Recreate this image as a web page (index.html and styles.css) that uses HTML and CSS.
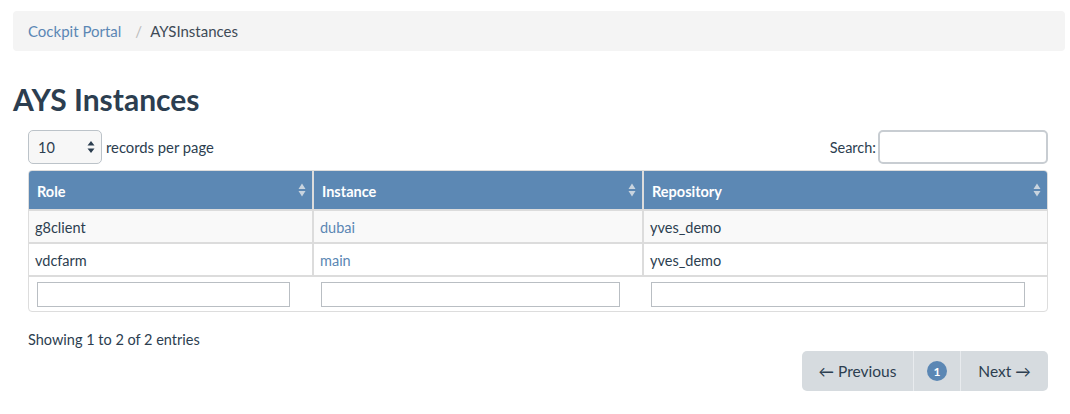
FILE: index.html
```html
<!DOCTYPE html>
<html>
<head>
<meta charset="utf-8">
<link rel="stylesheet" href="styles.css">
</head>
<body>
<div class="page">
  <nav class="breadcrumb">
    <a class="crumb-link" href="#">Cockpit Portal</a>
    <span class="crumb-sep">/</span>
    <span class="crumb-active">AYSInstances</span>
  </nav>
  <h1 class="title">AYS Instances</h1>
  <div class="dt">
    <div class="dt-top">
      <label class="length">
        <span class="select"><span class="select-val">10</span><svg class="select-arrows" width="8" height="14" viewBox="0 0 8 14"><path d="M4 1 L7.5 5.5 H0.5 Z M4 13 L7.5 8.5 H0.5 Z" fill="#2c3e50"/></svg></span>
        <span>records per page</span>
      </label>
      <label class="search">
        <span>Search:</span>
        <span class="search-input"></span>
      </label>
    </div>
    <div class="table-wrap">
      <table class="tbl">
        <colgroup><col class="c1"><col class="c2"><col class="c3"></colgroup>
        <thead>
          <tr>
            <th><span>Role</span><svg class="sort" width="8" height="14" viewBox="0 0 8 14"><path d="M4 0.5 L7.5 6 H0.5 Z M4 13.5 L7.5 8 H0.5 Z" fill="#c9d4df"/></svg></th>
            <th><span>Instance</span><svg class="sort" width="8" height="14" viewBox="0 0 8 14"><path d="M4 0.5 L7.5 6 H0.5 Z M4 13.5 L7.5 8 H0.5 Z" fill="#c9d4df"/></svg></th>
            <th><span>Repository</span><svg class="sort" width="8" height="14" viewBox="0 0 8 14"><path d="M4 0.5 L7.5 6 H0.5 Z M4 13.5 L7.5 8 H0.5 Z" fill="#c9d4df"/></svg></th>
          </tr>
        </thead>
        <tbody>
          <tr class="odd"><td>g8client</td><td><a href="#" class="lnk">dubai</a></td><td>yves_demo</td></tr>
          <tr><td>vdcfarm</td><td><a href="#" class="lnk">main</a></td><td>yves_demo</td></tr>
        </tbody>
        <tfoot>
          <tr class="filters">
            <td><span class="finput f1"></span></td>
            <td><span class="finput f2"></span></td>
            <td><span class="finput f3"></span></td>
          </tr>
        </tfoot>
      </table>
    </div>
    <div class="info">Showing 1 to 2 of 2 entries</div>
    <div class="pager-row">
      <div class="pager">
        <span class="pg pg-prev">← Previous</span>
        <span class="pg pg-num"><span class="num">1</span></span>
        <span class="pg pg-next">Next →</span>
      </div>
    </div>
  </div>
</div>
</body>
</html>
```
FILE: styles.css
```css
* { box-sizing: border-box; }
html, body { margin: 0; padding: 0; background: #fff; }
body {
  font-family: Lato, "Open Sans", sans-serif;
  color: #2c3e50;
  font-size: 14.5px;
}
.page { padding: 11px 5px 0 13px; }
.breadcrumb {
  height: 40px;
  background: #f4f4f4;
  border-radius: 4px;
  display: flex;
  align-items: center;
  padding: 0 15px;
  font-size: 15px;
}
.crumb-link { color: #5b87b4; text-decoration: none; }
.crumb-sep { color: #bbb; margin: 0 8px 0 14px; }
.crumb-active { color: #3e4a56; }
.title {
  margin: 30px 0 0 0;
  font-size: 30px;
  font-weight: 700;
  line-height: 36px;
  color: #2c3e50;
}
.dt { padding: 0 17px 0 15px; }
.dt-top {
  display: flex;
  justify-content: space-between;
  align-items: center;
  margin-top: 13px;
  height: 34px;
}
.length, .search { display: flex; align-items: center; gap: 4px; font-size: 14.5px; }
.length { font-size: 14.8px; }
.search { gap: 2px; }
.select {
  width: 74px;
  height: 34px;
  border: 1px solid #bcc3c9;
  border-radius: 5px;
  background: #f7f7f7;
  display: flex;
  align-items: center;
  justify-content: space-between;
  padding: 0 6px 0 9px;
  font-size: 14.5px;
}
.search-input {
  width: 170px;
  height: 34px;
  border: 2px solid #c8cdd2;
  border-radius: 5px;
  background: #fff;
}
.table-wrap {
  margin-top: 6px;
  border: 1px solid #dddddd;
  border-radius: 4px;
  overflow: hidden;
}
.tbl {
  width: 100%;
  border-collapse: collapse;
  table-layout: fixed;
}
.c1 { width: 284px; }
.c2 { width: 330px; }
.tbl th {
  background: #5c88b4;
  color: #fff;
  font-weight: 700;
  font-size: 14.5px;
  text-align: left;
  height: 39px;
  padding: 0 6px 0 8px;
  border-right: 2px solid #dcdcdc;
  border-bottom: 2px solid #dcdcdc;
  position: relative;
}
.tbl th:last-child { border-right: 0; }
.tbl th span { vertical-align: middle; }
.sort { position: absolute; right: 6px; top: 12px; }
.tbl td {
  height: 33px;
  padding: 1px 6px 0;
  border-right: 2px solid #dcdcdc;
  border-bottom: 2px solid #dcdcdc;
  font-size: 14.5px;
}
.tbl td:last-child { border-right: 0; }
.tbl tbody tr.odd td { background: #f9f9f9; }
.lnk { color: #5b87b4; text-decoration: none; }
.filters td { border: 0; height: 35px; padding: 1px 8px 0; vertical-align: middle; }
.finput {
  display: block;
  height: 25px;
  border: 1px solid #b9bec3;
  background: #fff;
}
.f1 { width: 253px; }
.f2 { width: 299px; }
.f3 { width: 374px; }
.info { margin-top: 19px; font-size: 14.5px; }
.pager-row { display: flex; justify-content: flex-end; margin-top: 3px; }
.pager {
  display: flex;
  height: 40px;
  background: #d6dbdf;
  border-radius: 5px;
  overflow: hidden;
}
.pg {
  display: flex;
  align-items: center;
  justify-content: center;
  font-size: 15.5px;
  color: #2c3e50;
}
.pg-prev { width: 112px; border-right: 1px solid #e8ebee; }
.pg-num { width: 47px; border-right: 1px solid #e8ebee; }
.pg-next { width: 87px; }
.num {
  width: 20px;
  height: 20px;
  border-radius: 50%;
  background: #5b87b4;
  color: #fff;
  font-weight: 700;
  font-size: 12px;
  display: flex;
  align-items: center;
  justify-content: center;
}
```
